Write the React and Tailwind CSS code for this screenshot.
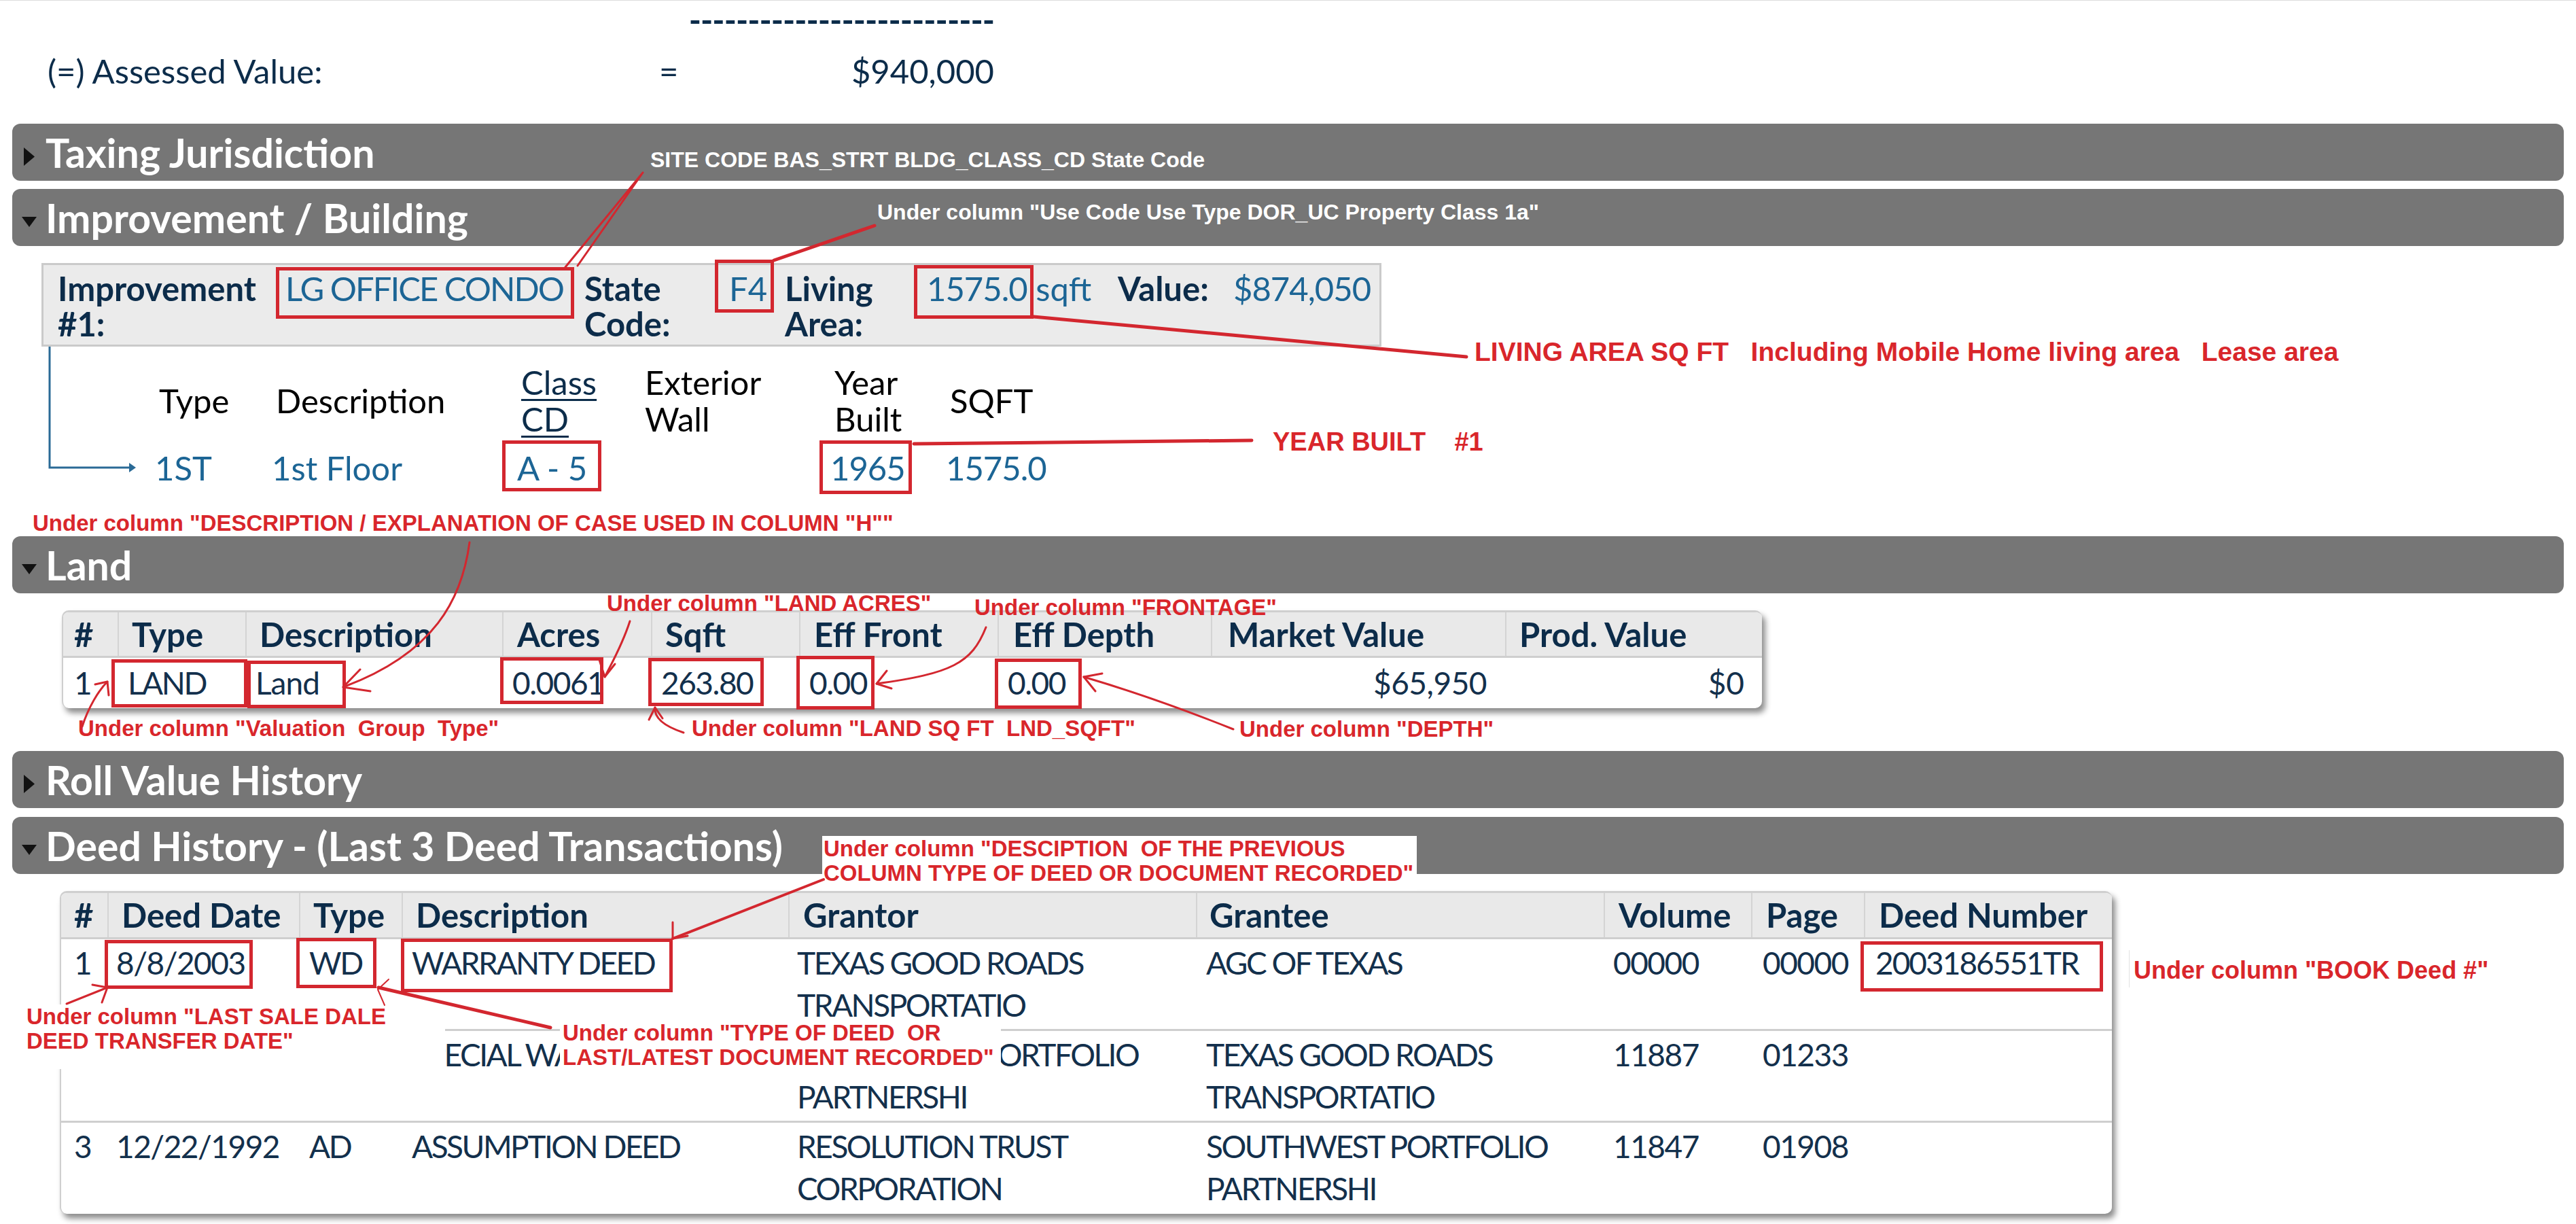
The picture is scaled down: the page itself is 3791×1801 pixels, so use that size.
import React from "react";

const landGrid = "grid grid-cols-[80px_188px_378px_219px_218px_292px_314px_433px_378px]";
const deedGrid = "grid grid-cols-[68px_282px_151px_569px_600px_600px_217px_166px_365px]";

const deedRows = [
  ["1", "8/8/2003", "WD", ["WARRANTY DEED"], ["TEXAS GOOD ROADS", "TRANSPORTATIO"], ["AGC OF TEXAS"], "00000", "00000", "2003186551TR"],
  ["2", "7/7/1995", "SW", ["SPECIAL WARRANTY DEED"], ["SOUTHWEST PORTFOLIO", "PARTNERSHI"], ["TEXAS GOOD ROADS", "TRANSPORTATIO"], "11887", "01233", ""],
  ["3", "12/22/1992", "AD", ["ASSUMPTION DEED"], ["RESOLUTION TRUST", "CORPORATION"], ["SOUTHWEST PORTFOLIO", "PARTNERSHI"], "11847", "01908", ""],
];

function Bar({ title, open }) {
  return (
    <div className="mx-[18px] flex h-[84px] items-center rounded-[12px] bg-[#767676]">
      <div className="flex w-[49px] items-center pl-[14px] pt-[12px]">
        {open ? (
          <svg width="22" height="15" viewBox="0 0 22 15">
            <path d="M0 0 L22 0 L11 15 Z" fill="#111" />
          </svg>
        ) : (
          <svg width="16" height="27" viewBox="0 0 16 27" className="ml-[3px]">
            <path d="M0 0 L16 13.5 L0 27 Z" fill="#111" />
          </svg>
        )}
      </div>
      <span className="text-[59px] font-bold leading-none text-white">{title}</span>
    </div>
  );
}

function Lines({ items }) {
  return items.map((t, i) => (
    <div key={i} className="whitespace-nowrap">
      {t}
    </div>
  ));
}

function Annotations() {
  const boxes = [
    [406, 392, 845, 468], [1052, 381, 1139, 459], [1345, 389, 1521, 468], [739, 647, 885, 722], [1206, 647, 1342, 726],
    [164, 969, 364, 1040], [364, 971, 509, 1041], [736, 966, 888, 1035], [954, 967, 1124, 1038], [1172, 964, 1287, 1043], [1464, 968, 1592, 1042],
    [154, 1382, 372, 1454], [436, 1379, 554, 1453], [590, 1380, 990, 1459], [2738, 1384, 3095, 1458],
  ];
  return (
    <svg className="pointer-events-none absolute left-0 top-0 z-30" width="3791" height="1801" viewBox="0 0 3791 1801" fill="none">
      <g stroke="#d3272f" strokeWidth="5">
        {boxes.map(([x1, y1, x2, y2], i) => (
          <rect key={i} x={x1 + 2.5} y={y1 + 2.5} width={x2 - x1 - 5} height={y2 - y1 - 5} />
        ))}
      </g>
      <g stroke="#d3272f" strokeLinecap="round" strokeLinejoin="round">
        <path d="M946 253 L832 392 M946 253 L850 390" strokeWidth="3" />
        <path d="M1287 331 L1139 382" strokeWidth="5" />
        <path d="M1521 465 L2158 524" strokeWidth="5" />
        <path d="M1345 652 L1842 647" strokeWidth="5" />
        <path d="M691 797 C 680 880, 640 960, 505 1010" strokeWidth="3" />
        <path d="M530 984 L505 1010 L545 1016" strokeWidth="3" />
        <path d="M927 913 C 915 950, 900 975, 890 995" strokeWidth="3" />
        <path d="M882 970 L890 995 L905 976" strokeWidth="3" />
        <path d="M1451 922 C 1430 975, 1400 990, 1290 1005" strokeWidth="3" />
        <path d="M1305 986 L1290 1005 L1312 1012" strokeWidth="3" />
        <path d="M121 1068 C 130 1040, 145 1015, 158 1002" strokeWidth="3" />
        <path d="M140 1006 L158 1002 L160 1022" strokeWidth="3" />
        <path d="M964 1040 C 962 1058, 985 1070, 1006 1077" strokeWidth="3" />
        <path d="M955 1058 L964 1040 L975 1056" strokeWidth="3" />
        <path d="M1595 995 C 1680 1020, 1760 1050, 1815 1072" strokeWidth="3" />
        <path d="M1612 1016 L1595 995 L1622 990" strokeWidth="3" />
        <path d="M1212 1293 L990 1380" strokeWidth="4" />
        <path d="M990 1356 L990 1380 L1012 1376" strokeWidth="3" />
        <path d="M98 1476 L158 1452" strokeWidth="3" />
        <path d="M136 1448 L158 1452 L150 1474" strokeWidth="3" />
        <path d="M810 1511 L557 1452" strokeWidth="5" />
        <path d="M566 1478 L556 1455 L572 1440" strokeWidth="2" />
      </g>
    </svg>
  );
}

function Notes() {
  const red = "absolute z-20 whitespace-pre font-['Liberation_Sans',Arial,sans-serif] text-[33px] font-bold leading-[36px] text-[#d9262b]";
  const big = "absolute z-20 whitespace-pre font-['Liberation_Sans',Arial,sans-serif] font-bold leading-[40px] text-[#d9262b]";
  return (
    <>
      <div className="absolute left-[957px] top-[216px] z-20 whitespace-pre font-['Liberation_Sans',Arial,sans-serif] text-[32px] font-bold leading-[36px] text-white">
        SITE CODE BAS_STRT BLDG_CLASS_CD State Code
      </div>
      <div className="absolute left-[1291px] top-[293px] z-20 whitespace-pre font-['Liberation_Sans',Arial,sans-serif] text-[32px] font-bold leading-[36px] text-white">
        Under column "Use Code Use Type DOR_UC Property Class 1a"
      </div>
      <div className={`${big} left-[2170px] top-[497px] text-[39px]`}>LIVING AREA SQ FT   Including Mobile Home living area   Lease area</div>
      <div className={`${big} left-[1873px] top-[629px] text-[38px]`}>YEAR BUILT    #1</div>
      <div className={`${red} left-[48px] top-[751px]`}>Under column "DESCRIPTION / EXPLANATION OF CASE USED IN COLUMN "H""</div>
      <div className={`${red} left-[893px] top-[869px]`}>Under column "LAND ACRES"</div>
      <div className={`${red} left-[1434px] top-[875px]`}>Under column "FRONTAGE"</div>
      <div className={`${red} left-[115px] top-[1053px]`}>Under column "Valuation  Group  Type"</div>
      <div className={`${red} left-[1018px] top-[1053px]`}>Under column "LAND SQ FT  LND_SQFT"</div>
      <div className={`${red} left-[1824px] top-[1054px]`}>Under column "DEPTH"</div>
      <div className={`${red} left-[1210px] top-[1229px] h-[80px] w-[875px] bg-white pl-[2px] pt-[1px]`}>
        {"Under column \"DESCIPTION  OF THE PREVIOUS\nCOLUMN TYPE OF DEED OR DOCUMENT RECORDED\""}
      </div>
      <div className="absolute left-[3133px] top-[1397px] z-20 h-[55px] w-px bg-[#e2e2e2]" />
      <div className={`${big} left-[3140px] top-[1407px] text-[36px]`}>Under column "BOOK Deed #"</div>
      <div className={`${red} left-0 top-[1477px] h-[95px] w-[655px] bg-white pl-[39px]`}>
        {"Under column \"LAST SALE DALE\nDEED TRANSFER DATE\""}
      </div>
      <div className={`${red} left-[824px] top-[1501px] h-[71px] w-[649px] bg-white pl-[4px]`}>
        {"Under column \"TYPE OF DEED  OR\nLAST/LATEST DOCUMENT RECORDED\""}
      </div>
    </>
  );
}

export default function App() {
  return (
    <div className="relative h-[1801px] w-[3791px] overflow-hidden border-t border-[#dcdcdc] bg-white font-['Lato',sans-serif] text-[49px] text-[#0c2c4a]">
      {/* assessed value */}
      <div className="flex h-[57px] items-center justify-end pr-[2328px]">
        <span className="font-bold leading-none tracking-[-1px]">--------------------------</span>
      </div>
      <div className="mt-[16px] flex h-[60px] items-center pl-[70px]">
        <span className="w-[900px] leading-none">(=) Assessed Value:</span>
        <span className="w-[60px] leading-none">=</span>
        <span className="w-[433px] text-right leading-none">$940,000</span>
      </div>

      <div className="mt-[48px]">
        <Bar title="Taxing Jurisdiction" />
      </div>
      <div className="mt-[12px]">
        <Bar title="Improvement / Building" open />
      </div>

      {/* improvement */}
      <div className="ml-[61px] mt-[25px] flex h-[123px] w-[1972px] border-[3px] border-[#cacaca] bg-[#ebebeb] pl-[21px] pt-[8px] leading-[52px]">
        <div className="w-[335px] font-bold">Improvement<br />#1:</div>
        <div className="w-[440px] tracking-[-2px] text-[#1c6595]">LG OFFICE CONDO</div>
        <div className="w-[213px] font-bold">State<br />Code:</div>
        <div className="w-[82px] text-[#1c6595]">F4</div>
        <div className="w-[209px] font-bold">Living<br />Area:</div>
        <div className="w-[281px] text-[#1c6595]"><span className="tracking-[-1px]">1575.0</span> sqft</div>
        <div className="w-[170px] font-bold">Value:</div>
        <div className="tracking-[-1px] text-[#1c6595]">$874,050</div>
      </div>

      <div className="relative pt-[25px]">
        <svg className="absolute left-[60px] top-0" width="150" height="200" viewBox="0 0 150 200" fill="none">
          <path d="M13 0 L13 178 L134 178" stroke="#2a6a96" strokeWidth="3" />
          <path d="M130 171 L140 178 L130 185 Z" fill="#2a6a96" />
        </svg>
        <div className="flex h-[108px] items-center pl-[234px] leading-[54px] text-black">
          <div className="w-[172px]">Type</div>
          <div className="w-[361px]">Description</div>
          <div className="w-[182px] text-[#0c2c4a] underline decoration-[3px] underline-offset-[6px]">Class<br />CD</div>
          <div className="w-[279px]">Exterior<br />Wall</div>
          <div className="w-[170px]">Year<br />Built</div>
          <div className="w-[200px]">SQFT</div>
        </div>
        <div className="mt-[18px] flex h-[54px] pl-[228px] leading-[54px] text-[#1c6595]">
          <div className="w-[172px]">1ST</div>
          <div className="w-[361px]">1st Floor</div>
          <div className="w-[182px]">A - 5</div>
          <div className="w-[279px]" />
          <div className="w-[170px] tracking-[-1px]">1965</div>
          <div className="w-[200px] tracking-[-1px]">1575.0</div>
        </div>
      </div>

      <div className="mt-[74px]">
        <Bar title="Land" open />
      </div>

      {/* land table */}
      <div className="ml-[91px] mt-[25px] w-[2502px] overflow-hidden rounded-[10px] border-l-[2px] border-t-[3px] border-[#cfcfcf] bg-white shadow-[5px_7px_9px_rgba(0,0,0,0.45)]">
        <div className={`${landGrid} h-[67px] border-b-[3px] border-[#cfcfcf] bg-[#e9e9e9] font-bold leading-[64px]`}>
          <div className="pl-[16px]">#</div>
          <div className="border-l-[2px] border-[#d4d4d4] pl-[19px]">Type</div>
          <div className="border-l-[2px] border-[#d4d4d4] pl-[19px]">Description</div>
          <div className="border-l-[2px] border-[#d4d4d4] pl-[20px]">Acres</div>
          <div className="border-l-[2px] border-[#d4d4d4] pl-[19px]">Sqft</div>
          <div className="border-l-[2px] border-[#d4d4d4] pl-[20px]">Eff Front</div>
          <div className="border-l-[2px] border-[#d4d4d4] pl-[21px]">Eff Depth</div>
          <div className="border-l-[2px] border-[#d4d4d4] pl-[23px]">Market Value</div>
          <div className="border-l-[2px] border-[#d4d4d4] pl-[19px]">Prod. Value</div>
        </div>
        <div className={`${landGrid} h-[74px] items-center text-[46px] leading-[60px] text-[#13304c]`}>
          <div className="pl-[16px]">1</div>
          <div className="pl-[15px] tracking-[-2.5px]">LAND</div>
          <div className="pl-[15px] tracking-[-1px]">Land</div>
          <div className="pl-[15px] tracking-[-1.5px]">0.0061</div>
          <div className="pl-[15px] tracking-[-1.5px]">263.80</div>
          <div className="pl-[15px] tracking-[-1.5px]">0.00</div>
          <div className="pl-[15px] tracking-[-1.5px]">0.00</div>
          <div className="pr-[27px] text-right tracking-[-0.5px]">$65,950</div>
          <div className="pr-[26px] text-right">$0</div>
        </div>
      </div>

      <div className="mt-[63px]">
        <Bar title="Roll Value History" />
      </div>
      <div className="mt-[13px]">
        <Bar title="Deed History - (Last 3 Deed Transactions)" open />
      </div>

      {/* deed table */}
      <div className="ml-[88px] mt-[25px] w-[3020px] overflow-hidden rounded-[10px] border-l-[2px] border-t-[3px] border-[#cfcfcf] bg-white shadow-[5px_7px_9px_rgba(0,0,0,0.45)]">
        <div className={`${deedGrid} h-[68px] border-b-[3px] border-[#cfcfcf] bg-[#e9e9e9] font-bold leading-[64px]`}>
          <div className="pl-[19px]">#</div>
          <div className="border-l-[2px] border-[#d4d4d4] pl-[19px]">Deed Date</div>
          <div className="border-l-[2px] border-[#d4d4d4] pl-[19px]">Type</div>
          <div className="border-l-[2px] border-[#d4d4d4] pl-[19px]">Description</div>
          <div className="border-l-[2px] border-[#d4d4d4] pl-[20px]">Grantor</div>
          <div className="border-l-[2px] border-[#d4d4d4] pl-[18px]">Grantee</div>
          <div className="border-l-[2px] border-[#d4d4d4] pl-[20px]">Volume</div>
          <div className="border-l-[2px] border-[#d4d4d4] pl-[20px]">Page</div>
          <div className="border-l-[2px] border-[#d4d4d4] pl-[20px]">Deed Number</div>
        </div>
        {deedRows.map((r, i) => (
          <div
            key={r[0]}
            className={`${deedGrid} ${i < 2 ? "h-[135px] border-b-[3px] border-[#cfcfcf]" : "h-[134px]"} pt-[4px] text-[46px] leading-[62px] text-[#13304c]`}
          >
            <div className="pl-[19px]">{r[0]}</div>
            <div className="pl-[13px] tracking-[-1.5px]">{r[1]}</div>
            <div className="pl-[15px] tracking-[-2.5px]">{r[2]}</div>
            <div className="pl-[15px] tracking-[-2.5px]"><Lines items={r[3]} /></div>
            <div className="pl-[13px] tracking-[-2.5px]"><Lines items={r[4]} /></div>
            <div className="pl-[15px] tracking-[-2.5px]"><Lines items={r[5]} /></div>
            <div className="pl-[14px] tracking-[-1.5px]">{r[6]}</div>
            <div className="pl-[17px] tracking-[-1.5px]">{r[7]}</div>
            <div className="pl-[17px] tracking-[-2px]">{r[8]}</div>
          </div>
        ))}
      </div>

      <Notes />
      <Annotations />
    </div>
  );
}
